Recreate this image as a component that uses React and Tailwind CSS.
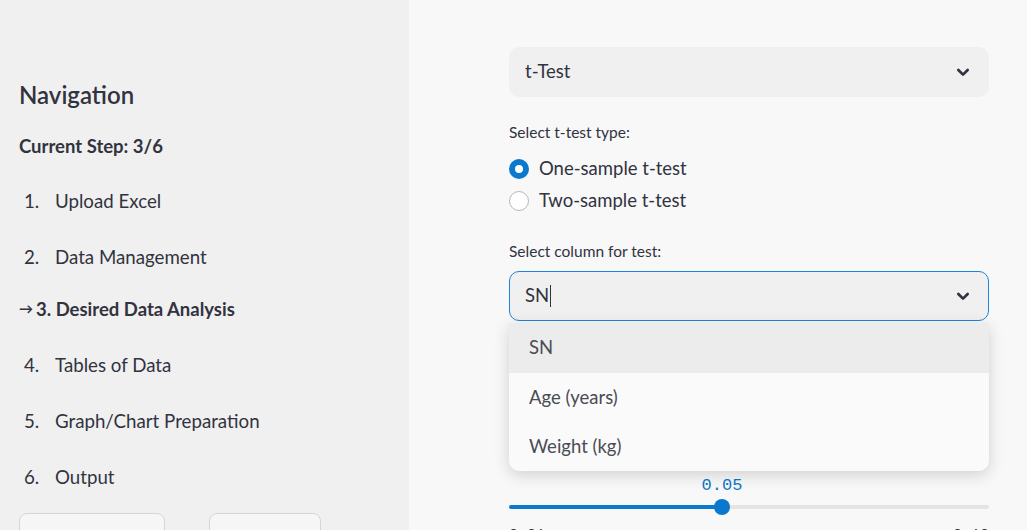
import React from 'react';

const Chevron = () => (
  <svg width="16" height="16" viewBox="0 0 24 24" fill="none" stroke="#31333f" strokeWidth="4" strokeLinecap="round" strokeLinejoin="round">
    <path d="M5 9l7 7 7-7" />
  </svg>
);

const steps = ['Upload Excel', 'Data Management', 'Desired Data Analysis', 'Tables of Data', 'Graph/Chart Preparation', 'Output'];

const Sidebar = () => (
  <div className="w-[409px] shrink-0 h-[530px] bg-[#f0f0f0] pl-[19px] pt-[78px] text-[#31333f] overflow-hidden">
    <div className="h-[34px] leading-[34px] text-[24px] font-semibold">Navigation</div>
    <div className="mt-[22px] h-[24px] leading-[24px] text-[18.5px] font-bold">Current Step: 3/6</div>
    {steps.map((s, i) => {
      const n = i + 1;
      if (n === 3) {
        return (
          <div key={s} className="mt-[24px] h-[28px] leading-[28px] text-[18.5px] font-bold flex items-center">
            <span className="text-[14px] mr-[3px]">→</span>3. {s}
          </div>
        );
      }
      return (
        <div key={s} className={`${n === 1 ? 'mt-[29px]' : 'mt-[28px]'} h-[28px] leading-[28px] text-[18.7px] flex`}>
          <span className="w-[36px] pl-[5px]">{n}.</span>
          <span>{s}</span>
        </div>
      );
    })}
    <div className="mt-[22px] flex gap-[44px]">
      <div className="w-[146px] h-[40px] rounded-[8px] border border-[#d6d6d6] bg-[#f6f6f6]" />
      <div className="w-[112px] h-[40px] rounded-[8px] border border-[#d6d6d6] bg-[#f6f6f6]" />
    </div>
  </div>
);

const Radio = ({ checked, label }) => (
  <div className="h-[32px] flex items-center">
    {checked ? (
      <div className="w-[20px] h-[20px] rounded-full bg-[#0a78cc] flex items-center justify-center">
        <div className="w-[8px] h-[8px] rounded-full bg-white" />
      </div>
    ) : (
      <div className="w-[20px] h-[20px] rounded-full border border-[#b8b8b8] bg-white" />
    )}
    <span className="ml-[10px] text-[18.5px]">{label}</span>
  </div>
);

const Main = () => (
  <div className="flex-1 h-[530px] bg-[#f8f8f8] pl-[100px] pt-[47px] text-[#31333f] overflow-hidden">
    <div className="w-[480px]">
      <div className="h-[50px] rounded-[10px] bg-[#f0f0f0] pl-[16px] pr-[18px] flex items-center justify-between">
        <span className="text-[18.5px]">t-Test</span>
        <Chevron />
      </div>
      <div className="mt-[25px] h-[20px] leading-[20px] text-[15.5px]">Select t-test type:</div>
      <div className="mt-[11px]">
        <Radio checked label="One-sample t-test" />
        <Radio label="Two-sample t-test" />
      </div>
      <div className="mt-[24px] h-[20px] leading-[20px] text-[15.5px]">Select column for test:</div>
      <div className="relative mt-[10px]">
        <div className="h-[50px] rounded-[10px] bg-[#f0f0f0] border border-[#1c83e1] pl-[15px] pr-[17px] flex items-center justify-between">
          <span className="text-[18.5px] flex items-center">SN<span className="ml-[1px] inline-block w-[1px] h-[22px] bg-[#31333f]" /></span>
          <Chevron />
        </div>
        <div className="absolute left-0 right-0 top-[52px] z-10 rounded-b-[10px] bg-[#fafafa] shadow-[0_4px_16px_rgba(0,0,0,0.16)] overflow-hidden text-[18.5px] text-[#4a4b55]">
          <div className="h-[50px] bg-[#ececec] pl-[20px] flex items-center">SN</div>
          <div className="h-[50px] pl-[20px] flex items-center">Age (years)</div>
          <div className="h-[48px] pl-[20px] flex items-center">Weight (kg)</div>
        </div>
      </div>
      <div className="mt-[157px] relative h-[16px]">
        <span className="absolute left-[213px] -translate-x-1/2 top-0 leading-[16px] text-[17px] text-[#0a78cc] font-['Liberation_Mono',monospace]">0.05</span>
      </div>
      <div className="relative mt-[5px] h-[16px] flex items-center">
        <div className="w-full h-[4px] rounded-full bg-[#e4e4e4]" />
        <div className="absolute left-0 w-[213px] h-[4px] rounded-full bg-[#0a78cc]" />
        <div className="absolute left-[205px] w-[16px] h-[16px] rounded-full bg-[#0a78cc]" />
      </div>
      <div className="mt-[10px] flex justify-between text-[15px] font-['Liberation_Mono',monospace]">
        <span>0.01</span>
        <span>0.10</span>
      </div>
    </div>
  </div>
);

export default function App() {
  return (
    <div className="w-[1027px] h-[530px] flex overflow-hidden font-['Lato','Noto_Sans',sans-serif]">
      <Sidebar />
      <Main />
    </div>
  );
}
